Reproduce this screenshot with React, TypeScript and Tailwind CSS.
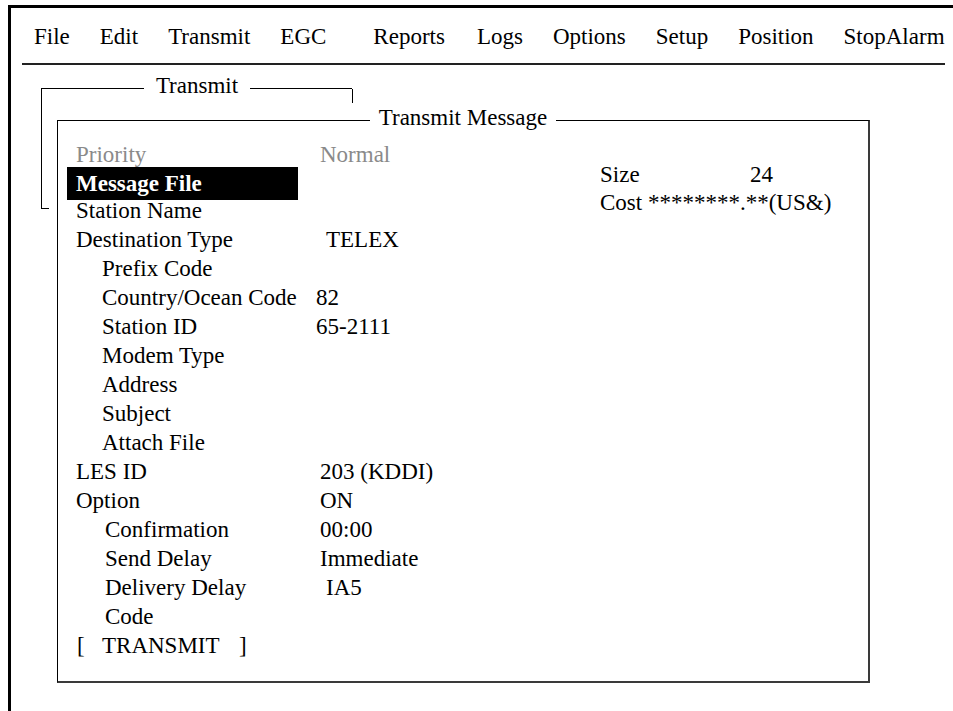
import React from 'react';

const menuItems = ['File', 'Edit', 'Transmit', 'EGC', 'Reports', 'Logs', 'Options', 'Setup', 'Position', 'StopAlarm'];

type Row = {
  label: string;
  value?: string;
  indent?: number;
  valueOffset?: number;
  muted?: boolean;
  selected?: boolean;
};

const rows: Row[] = [
  { label: 'Priority', value: 'Normal', muted: true },
  { label: 'Message File', selected: true },
  { label: 'Station Name' },
  { label: 'Destination Type', value: 'TELEX', valueOffset: 6 },
  { label: 'Prefix Code', indent: 26 },
  { label: 'Country/Ocean Code', value: '82', indent: 26, valueOffset: -4 },
  { label: 'Station ID', value: '65-2111', indent: 26, valueOffset: -4 },
  { label: 'Modem Type', indent: 26 },
  { label: 'Address', indent: 26 },
  { label: 'Subject', indent: 26 },
  { label: 'Attach File', indent: 26 },
  { label: 'LES ID', value: '203 (KDDI)' },
  { label: 'Option', value: 'ON' },
  { label: 'Confirmation', value: '00:00', indent: 29 },
  { label: 'Send Delay', value: 'Immediate', indent: 29 },
  { label: 'Delivery Delay', value: 'IA5', indent: 29, valueOffset: 6 },
  { label: 'Code', indent: 29 },
];

const FieldRow: React.FC<{ row: Row }> = ({ row }) => {
  if (row.selected) {
    return (
      <div className="h-[29px]">
        <div className="-mt-[2px] -ml-[9px] h-[33px] w-[231px] bg-black pl-[9px] font-bold leading-[33px] text-white">
          {row.label}
        </div>
      </div>
    );
  }
  const indent = row.indent ?? 0;
  return (
    <div className={`flex h-[29px] whitespace-nowrap ${row.muted ? 'text-[#8a8a8a]' : 'text-black'}`}>
      <span style={{ width: 244 - indent + (row.valueOffset ?? 0), marginLeft: indent }}>{row.label}</span>
      {row.value && <span>{row.value}</span>}
    </div>
  );
};

export default function App() {
  return (
    <div className="h-[711px] w-[953px] overflow-hidden bg-white pl-[8px] pt-[5px] font-['Liberation_Serif','Times_New_Roman',serif] text-[23px] leading-[29px] text-black">
      <div className="relative h-full border-l-[3px] border-t-[3px] border-black">
        {/* Menu bar */}
        <div className="mt-[14px] flex h-[29px] whitespace-nowrap pl-[23px]">
          {menuItems.map((item) => (
            <span
              key={item}
              className={item === 'EGC' ? 'mr-[47px]' : item === 'Reports' ? 'mr-[32px]' : 'mr-[30px]'}
            >
              {item}
            </span>
          ))}
        </div>
        <div className="ml-[11px] mt-[12px] h-[2px] w-[923px] bg-[#222]" />

        {/* Transmit window (behind) */}
        <div className="absolute left-[30px] top-[80px] h-[121px] w-[311px] border-l border-t border-black">
          <div className="absolute right-[-1px] top-0 h-[14px] border-r border-black" />
          <div className="absolute bottom-0 left-0 w-[7px] border-b border-black" />
          <div className="absolute -top-[18px] left-0 right-0 flex justify-center">
            <span className="bg-white px-[12px]">Transmit</span>
          </div>
        </div>

        {/* Transmit Message window */}
        <div className="absolute left-[46px] top-[112px] h-[563px] w-[813px] border-b-2 border-l border-r-2 border-t border-b-[#3a3a3a] border-l-black border-r-[#3a3a3a] border-t-black bg-white">
          <div className="absolute -top-[18px] left-0 right-0 flex justify-center">
            <span className="bg-white px-[9px]">Transmit Message</span>
          </div>
          <div className="flex pl-[18px] pt-[19px]">
            <div className="w-[524px]">
              {rows.map((row) => (
                <FieldRow key={row.label} row={row} />
              ))}
              <div className="flex h-[29px] whitespace-nowrap">
                <span className="ml-[1px] w-[25px]">[</span>
                <span className="w-[137px]">TRANSMIT</span>
                <span>]</span>
              </div>
            </div>
            <div className="whitespace-nowrap pt-[20px]">
              <div className="flex h-[28px]">
                <span className="w-[150px]">Size</span>
                <span>24</span>
              </div>
              <div className="h-[28px]">Cost ********.**(US&amp;)</div>
            </div>
          </div>
        </div>
      </div>
    </div>
  );
}
